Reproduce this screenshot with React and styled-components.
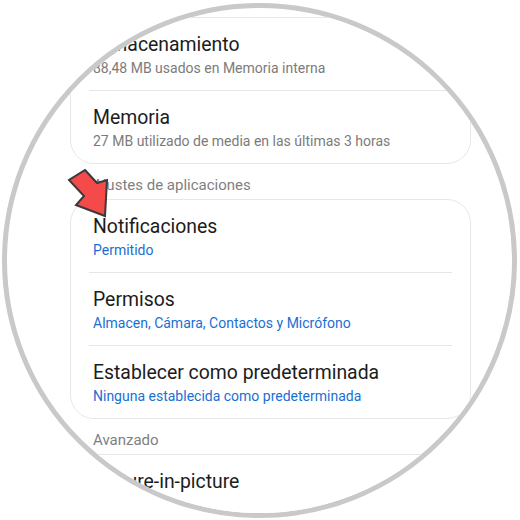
import React from "react";
import styled, { createGlobalStyle } from "styled-components";

const GlobalStyle = createGlobalStyle`
  html, body { margin: 0; padding: 0; background: #ffffff; }
  body { font-family: Roboto, "Noto Sans", "Liberation Sans", sans-serif; }
`;

const Stage = styled.div`
  position: relative;
  width: 520px;
  height: 520px;
  box-sizing: border-box;
  padding: 3px 0 0 2px;
  background: #ffffff;
  overflow: hidden;
`;

const Lens = styled.div`
  width: 515px;
  height: 515px;
  box-sizing: border-box;
  border: 5px solid #c9c9c9;
  border-radius: 50%;
  overflow: hidden;
  background: #ffffff;
`;

const Screen = styled.div`
  display: flex;
  flex-direction: column;
  padding: 9px 0 0 63px;
  width: 401px;
`;

const Card = styled.div`
  border: 1px solid #e7e7e7;
  border-radius: 24px;
  background: #ffffff;
  display: flex;
  flex-direction: column;
`;

const Row = styled.div`
  height: 72px;
  box-sizing: border-box;
  padding: 15px 22px 0 22px;
  display: flex;
  flex-direction: column;
`;

const Title = styled.div`
  font-size: 19.4px;
  line-height: 24px;
  color: #1c1c1c;
  white-space: nowrap;
`;

const Sub = styled.div`
  font-size: 14px;
  line-height: 20px;
  margin-top: 1px;
  white-space: nowrap;
  color: ${(p) => (p.$accent ? "#1a6fd3" : "#7b7b7b")};
`;

const Divider = styled.div`
  height: 1px;
  margin: 0 18px;
  background: #e6e6e6;
`;

const Header = styled.div`
  padding: 11px 22px 4px 23px;
  font-size: 15px;
  line-height: 20px;
  color: #7f7f7f;
  white-space: nowrap;
`;

const Arrow = styled.svg`
  position: absolute;
  left: 60px;
  top: 160px;
  width: 60px;
  height: 65px;
  overflow: visible;
`;

function Item({ title, sub, accent }) {
  return (
    <Row>
      <Title>{title}</Title>
      {sub && <Sub $accent={accent}>{sub}</Sub>}
    </Row>
  );
}

export default function App() {
  return (
    <>
      <GlobalStyle />
      <Stage>
        <Lens>
          <Screen>
            <Card>
              <Item title="Almacenamiento" sub="88,48 MB usados en Memoria interna" />
              <Divider />
              <Item title="Memoria" sub="27 MB utilizado de media en las últimas 3 horas" />
            </Card>
            <Header>Ajustes de aplicaciones</Header>
            <Card>
              <Item title="Notificaciones" sub="Permitido" accent />
              <Divider />
              <Item title="Permisos" sub="Almacen, Cámara, Contactos y Micrófono" accent />
              <Divider />
              <Item
                title="Establecer como predeterminada"
                sub="Ninguna establecida como predeterminada"
                accent
              />
            </Card>
            <Header>Avanzado</Header>
            <Card>
              <Item title="Picture-in-picture" />
            </Card>
          </Screen>
        </Lens>
        <Arrow viewBox="60 160 60 65">
          <polygon
            points="85,170 97,183 107,180 105,216 76,205 84,196 69,180"
            fill="#f44a4a"
            stroke="#3a3a3a"
            strokeWidth="2"
            strokeLinejoin="miter"
          />
        </Arrow>
      </Stage>
    </>
  );
}
